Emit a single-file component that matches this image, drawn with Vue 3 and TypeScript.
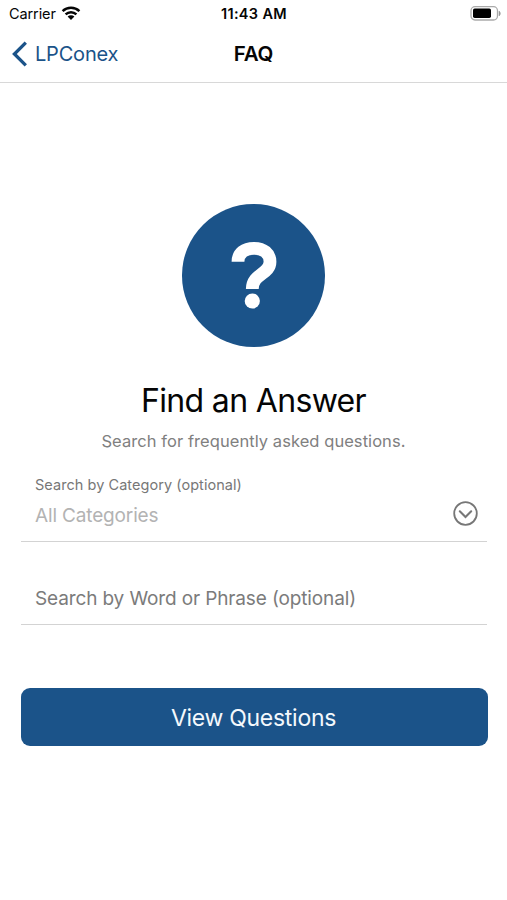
<script setup lang="ts">
import { ref } from 'vue'

const phrase = ref('')
</script>

<template>
  <main class="screen">
    <header class="top">
      <div class="status">
        <div class="carrier">
          <span>Carrier</span>
          <svg class="wifi" viewBox="0 0 20 15" aria-hidden="true">
            <path d="M1.6 5.2a12.2 12.2 0 0 1 16.800 0M4.600 8.400a7.800 7.800 0 0 1 10.800 0" fill="none" stroke="#050505" stroke-width="2.500" />
            <path d="M6.600 10.600a4.900 4.900 0 0 1 6.800 0L10 14z" fill="#050505" />
          </svg>
        </div>
        <span class="time">11:43 AM</span>
        <svg class="battery" viewBox="0 0 32 16" aria-hidden="true">
          <rect x="1" y="0.700" width="26.500" height="13.300" rx="4" fill="#fff" stroke="#aaa" stroke-width="1.300" />
          <rect x="3" y="2.500" width="18" height="9.500" rx="1.700" fill="#000" />
          <path d="M29 5v5a3 3 0 0 0 0-5" fill="#999" stroke="#999" stroke-width="0.500" />
        </svg>
      </div>
      <nav class="nav">
        <a class="back">
          <svg class="chevron" viewBox="0 0 16 26" aria-hidden="true">
            <path d="M13.800 1.600 2.400 13l11.400 11.400" fill="none" stroke="#1b5389" stroke-width="3.300" />
          </svg>
          <span>LPConex</span>
        </a>
        <h1 class="title">FAQ</h1>
      </nav>
    </header>

    <section class="content">
      <svg class="hero" viewBox="0 0 143 143" aria-hidden="true">
        <circle cx="71.500" cy="71.500" r="71.500" fill="#1b5389" />
        <path d="M56 57.800C56 49 62.500 44.300 72 44.300c9.800 0 16 5.400 16 13.400C88 70.500 70.300 69.500 70.300 85" fill="none" stroke="#fff" stroke-width="12.800" />
        <circle cx="70.300" cy="97" r="7.600" fill="#fff" />
      </svg>
      <h2 class="heading">Find an Answer</h2>
      <p class="sub">Search for frequently asked questions.</p>

      <div class="field category">
        <div>
          <div class="label">Search by Category (optional)</div>
          <div class="value">All Categories</div>
        </div>
        <svg class="drop" viewBox="0 0 25 25" aria-hidden="true">
          <circle cx="12.500" cy="12.500" r="11.300" fill="none" stroke="#777" stroke-width="1.800" />
          <path d="m6.800 10.300 5.700 5.700 5.700-5.700" fill="none" stroke="#777" stroke-width="2.100" stroke-linecap="round" />
        </svg>
      </div>
      <div class="field word">
        <input v-model="phrase" class="phrase" type="text" placeholder="Search by Word or Phrase (optional)" />
      </div>
      <button class="submit" type="button">View Questions</button>
    </section>
  </main>
</template>

<style>
body {
  background: #fff;
}
</style>

<style scoped>
.screen {
  height: 900px;
  overflow: hidden;
  background: #fff;
  color: #050505;
  font-family: Inter, "Liberation Sans", sans-serif;
}
.top {
  height: 83px;
  box-sizing: border-box;
  border-bottom: 1px solid #d8d8d8;
}
.status {
  display: grid;
  grid-template-columns: 1fr auto 1fr;
  align-items: center;
  height: 27px;
  padding: 0 5px 0 9px;
  font-size: 14.5px;
}
.carrier {
  display: flex;
  align-items: center;
  gap: 5px;
  letter-spacing: -0.1px;
}
.wifi {
  width: 20px;
  height: 15px;
}
.time {
  margin-right: 3px;
  font-weight: 600;
  letter-spacing: 0.35px;
}
.battery {
  justify-self: end;
  width: 32px;
  height: 16px;
}
.nav {
  display: grid;
  grid-template-columns: 1fr auto 1fr;
  align-items: center;
  height: 54px;
  padding: 0 12px;
}
.back {
  display: flex;
  align-items: center;
  gap: 7px;
  color: #1b5389;
  font-size: 20px;
  letter-spacing: -0.2px;
}
.chevron {
  width: 16px;
  height: 26px;
}
.title {
  margin: 0 0 2px;
  font-size: 20.5px;
  font-weight: 600;
  letter-spacing: -0.2px;
}
.content {
  display: flex;
  flex-direction: column;
  padding: 121px 20px 0;
}
.hero {
  align-self: center;
  width: 143px;
  height: 143px;
}
.heading {
  margin: 34px 0 0;
  line-height: 40px;
  text-align: center;
  font-size: 32px;
  font-weight: 400;
  letter-spacing: -0.66px;
}
.sub {
  margin: 8px 0 0;
  line-height: 24px;
  text-align: center;
  color: #808080;
  font-size: 16.5px;
  letter-spacing: 0.06px;
}
.field {
  display: flex;
  box-sizing: border-box;
  margin-left: 1px;
  border-bottom: 1px solid #d3d3d3;
}
.category {
  justify-content: space-between;
  height: 79px;
  margin-top: 10px;
  padding: 12px 9px 0 14px;
}
.label {
  line-height: 20px;
  color: #777;
  font-size: 14.5px;
  letter-spacing: 0.05px;
}
.value {
  margin-top: 9px;
  line-height: 24px;
  color: #b3b3b3;
  font-size: 19px;
  letter-spacing: -0.15px;
}
.drop {
  width: 25px;
  height: 25px;
  margin-top: 26px;
}
.word {
  height: 83px;
  padding: 42px 14px 0;
}
.phrase {
  width: 100%;
  height: 28px;
  padding: 0;
  border: 0;
  outline: 0;
  background: transparent;
  font: 400 19px Inter, "Liberation Sans", sans-serif;
  letter-spacing: -0.13px;
  color: #777;
}
.phrase::placeholder {
  color: #7b7b7b;
  opacity: 1;
}
.submit {
  height: 58.5px;
  margin: 62.5px -0.5px 0 0.5px;
  padding: 2px 1px 0 0;
  border: 0;
  border-radius: 9px;
  background: #1b5389;
  color: #f4f8fc;
  font: 400 23px Inter, "Liberation Sans", sans-serif;
  letter-spacing: -0.28px;
}
</style>
